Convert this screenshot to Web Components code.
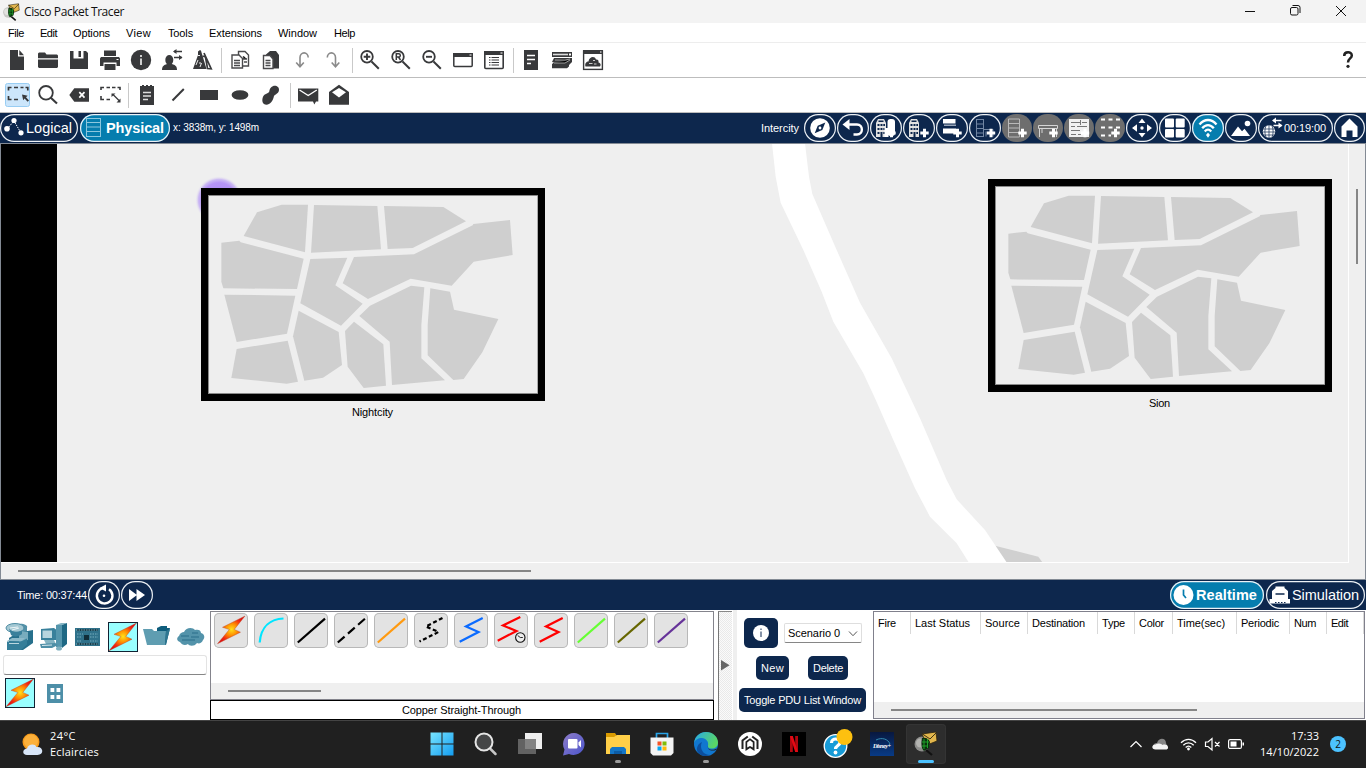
<!DOCTYPE html>
<html lang="en">
<head>
<meta charset="utf-8">
<title>Cisco Packet Tracer</title>
<style>
html,body{margin:0;padding:0;width:1366px;height:768px;overflow:hidden;background:#fff}
body{font:11px/14px "Liberation Sans",Arial,sans-serif;color:#000}
</style>
</head>
<body>
<pt-app></pt-app>
<script>
const define = (tag, css, html) => customElements.define(tag, class extends HTMLElement {
  connectedCallback() {
    if (this.shadowRoot) return;
    this.attachShadow({ mode: 'open' }).innerHTML =
      `<style>*{box-sizing:border-box}svg{display:block}${css}</style>${typeof html === 'function' ? html(this) : html}`;
  }
});

/* A single line of text, tracked so that it fills the width given in "w". */
customElements.define('pt-label', class extends HTMLElement {
  connectedCallback() {
    if (this.shadowRoot) return;
    this.attachShadow({ mode: 'open' }).innerHTML =
      '<style>:host{display:inline-block;white-space:nowrap;flex:none}span{display:inline-block}</style><span><slot></slot></span>';
    const w = +this.getAttribute('w'), span = this.shadowRoot.querySelector('span');
    if (!w) return;
    const natural = span.getBoundingClientRect().width;
    span.style.letterSpacing = ((w - natural) / this.textContent.length).toFixed(3) + 'px';
    this.style.width = w + 'px';
  }
});

const D = '#38393b';
const bolt = id => `<defs><radialGradient id="${id}" gradientUnits="userSpaceOnUse" cx="15" cy="14.500" r="15"><stop offset="0" stop-color="#ffe21a"/><stop offset=".4" stop-color="#ff8c00"/><stop offset=".75" stop-color="#f22a12"/><stop offset="1" stop-color="#e01010"/></radialGradient></defs><path d="M28.500 1L6 12.300l6.800 2.200L1 28.700 24 17.200l-6.200-2.800z" fill="url(#${id})" stroke="#b5482a" stroke-width=".4"/>`;
const plus = (x, y) => `<path d="M${x} ${y - 4.2}v8.400M${x - 4.2} ${y}h8.400" stroke="#fff" stroke-width="3"/>`;
const tracer = `<circle cx="9" cy="13" r="7.500" fill="#8d8d8b"/><circle cx="7.500" cy="12" r="4.500" fill="#b3b3b0"/><path d="M9 3l14-2 1 9-10 4z" fill="#e2b64c" stroke="#2d2410" stroke-width=".8"/><path d="M9.500 3l7.500 5 6.500-6.500" fill="none" stroke="#2d2410" stroke-width=".9"/><path d="M9 7c4-1 7 1 8 4l-1 6-5 3c-3-3-3-8-2-13z" fill="#0b300d"/><path d="M11 8v10M14.500 8v9M9 11h7M9 15h6" stroke="#1fa02a" stroke-width="1"/><path d="M13 19l6 5" stroke="#111" stroke-width="2.200"/>`;
const tower = `<path fill="#e2e2e2" d="M6 9l2-4h6l2 4v14H6z"/><path fill="#0d274d" d="M8.500 6.500h5v1.500h-5zM7.500 10h2v2h-2zM10.500 10h2v2h-2zM13.300 10h1.700v2h-1.700zM7.500 14h2v2h-2zM10.500 14h2v2h-2zM13.300 14h1.700v2h-1.700zM7.500 18h2v2h-2zM10.500 18h2v5h-2zM13.300 18h1.700v2h-1.700z"/>`;

/* name: [width, height, markup] */
const ICONS = {
  app: [18, 18, `<g transform="scale(.72)">${tracer.replace('r="7.500" fill="#8d8d8b"', 'r="7.500" fill="#c9c9c6"').replace('#b3b3b0', '#e2e2df')}</g>`],
  new: [31, 34, `<path fill="${D}" d="M9 7h8v6.500h6V27H9z"/><path fill="${D}" d="M18.300 7l4.700 5.200h-4.700z"/>`],
  open: [31, 34, `<path fill="${D}" d="M6 10.500l1-1h6l1.500 2H25l1 1v2.700H6zM6 16.500h20V24l-1 1H7l-1-1z"/>`],
  save: [31, 34, `<path fill="${D}" d="M7 8h3.500v7.500h10V8H23l2 2v16H7zM15.500 8H18v6h-2.500z"/>`],
  print: [31, 34, `<path fill="${D}" d="M10 7.500h12V13H10zM6 15.500l1-1.500h18l1 1.500V23h-3.500v-3.500h-13V23H6zM10.500 21h11v6h-11z"/><path stroke="#fff" d="M22.500 16.500h2"/>`],
  info: [31, 34, `<circle cx="16" cy="17" r="10.200" fill="${D}"/><path stroke="#cfcfcf" stroke-width="2" d="M16 15.500V22M16 12v2"/>`],
  user: [31, 34, `<ellipse cx="13.300" cy="17" rx="4" ry="5" fill="${D}"/><path fill="${D}" d="M6 27c0-4 2-5 5-6h5c3 1 5 2 5 6z"/><path stroke="${D}" stroke-width="1.300" fill="none" d="M18 8.500h8M18 14.500h8"/><path fill="${D}" d="M17 8.500l3.500-2.500v5zM26.500 14.500l-3.500-2.500v5z"/>`],
  metro: [31, 34, `<path fill="${D}" d="M11 8.500l2-1.500 1 .8L19.500 26H6l5-14z"/><path stroke="${D}" stroke-width="1.700" fill="none" d="M15.500 13l3 1 2 11.500 3.700.3L17 10"/><path stroke="#fff" stroke-width=".9" d="M9 22l2-5M13 24l1.500-4M11 12.500h2M12 20h2"/>`],
  copy: [31, 34, `<g fill="#fff" stroke="#4a4a4c" stroke-width="1.400"><path d="M13.500 8.500h6.500l3.500 3.500v11h-10z"/><path d="M7 12h7l3.500 3.500V25H7z"/></g><path stroke="#4a4a4c" stroke-width="1.300" d="M9 17.500h6M9 20h6M9 22.500h6M18.500 13v3h3.500M19 19h3"/>`],
  paste: [31, 34, `<path fill="${D}" d="M10 11.500l4-3.500h6l3 4v13.500H12z"/><path fill="#fff" stroke="#4a4a4c" stroke-width="1.400" d="M7.500 12.500H14l3 3.500v9.500H7.500z"/><path stroke="#4a4a4c" stroke-width="1.300" d="M9.500 17.500h5M9.500 20h5M9.500 22.500h5"/>`],
  undo: [31, 34, `<path fill="none" stroke="#8a8a8a" stroke-width="1.600" d="M21.200 14.500a4.100 4.600 0 0 0-8.200 0V23M9.200 19.500l3.800 4.300 3.800-4.300"/>`],
  redo: [31, 34, `<path fill="none" stroke="#8a8a8a" stroke-width="1.600" d="M9.300 14.500a4.100 4.600 0 0 1 8.200 0V23M13.700 19.500l3.800 4.300 3.800-4.300"/>`],
  zin: [31, 34, `<path fill="none" stroke="${D}" stroke-width="2" d="M16.500 18.500L23.800 25.700"/><circle cx="12" cy="13.800" r="5.800" fill="none" stroke="${D}" stroke-width="1.800"/><path stroke="${D}" stroke-width="1.900" d="M12 10.500v6.600M8.700 13.800h6.600"/>`],
  zre: [31, 34, `<path fill="none" stroke="${D}" stroke-width="2" d="M16.500 18.500L23.800 25.700"/><circle cx="12" cy="13.800" r="5.800" fill="none" stroke="${D}" stroke-width="1.800"/><path fill="none" stroke="${D}" stroke-width="1.500" d="M10.300 17v-6.200h2.500c2 0 2 3.200 0 3.200h-2.500M12.500 14l2 3"/>`],
  zout: [31, 34, `<path fill="none" stroke="${D}" stroke-width="2" d="M16.500 18.500L23.800 25.700"/><circle cx="12" cy="13.800" r="5.800" fill="none" stroke="${D}" stroke-width="1.800"/><path stroke="${D}" stroke-width="1.900" d="M9 13.800h6"/>`],
  win: [31, 34, `<rect x="5.800" y="11" width="18.400" height="12.500" rx="1" fill="#fff" stroke="${D}" stroke-width="1.500"/><path fill="${D}" d="M5 10h20v4H5z"/><path stroke="#fff" d="M21.500 12h2"/>`],
  list: [31, 34, `<rect x="5.800" y="9" width="18.400" height="16.500" rx="1" fill="#fff" stroke="${D}" stroke-width="1.600"/><path fill="${D}" d="M5 8h20v4H5z"/><path stroke="#fff" d="M21.500 10h2"/><path stroke="${D}" stroke-width="1.200" d="M10 14.500h1.500M12.500 14.500H20M10 17h1.500M12.500 17H20M10 19.500h1.500M12.500 19.500H20M10 22h1.500M12.500 22H20"/>`],
  doc: [31, 34, `<path fill="${D}" d="M8 7h14v20H8z"/><path stroke="#fff" stroke-width="1.300" d="M11 12.500h8M11 16.500h8M11 20.500h4"/>`],
  stack: [31, 34, `<path fill="${D}" d="M5 9h20v5H5z"/><path stroke="#ddd" stroke-width="1.600" d="M6 11.500h15"/><path stroke="#fff" stroke-width="2" d="M22 11.500h2"/><path fill="${D}" d="M7 15h18v4l-3 3v1.500l-2 1.700H5V21l2-1.500-2-.5z"/><path stroke="#bbb" stroke-width=".8" d="M8 17h10l5-1M7 20h11l5-3"/>`],
  cloud: [31, 34, `<rect x="5.600" y="8" width="18.800" height="18.400" fill="#fff" stroke="${D}" stroke-width="1.400"/><path fill="${D}" d="M5 7h20v4H5z"/><path stroke="#fff" d="M22 9h1.500"/><path fill="${D}" d="M7.500 23.500c-1-3 1-5 3-5 .5-5 6.500-6 7.500-2 2-.3 2.800 1 2.500 3 2.500.5 2.500 3 1.500 4z"/><path stroke="#ccc" stroke-width="1.200" d="M11 20.500h3.500M15 17.500h2M16 21h2.500"/>`],
  select: [31, 34, `<rect x="4.500" y="5.500" width="24" height="23" rx="2" fill="#cce6fb" stroke="#98cdf3"/><path fill="none" stroke="${D}" stroke-width="1.700" d="M7.500 12.500v-3h3M13 9.500h4M19.500 9.500h3M24.500 9.500h2.300v3M7.500 18v3.500h3M13 21.500h4"/><path fill="${D}" d="M21 16.500l5.700 1.200-1.700 1.500 3 3.200-1.400 1.300-3-3.300-1.400 1.800z"/>`],
  find: [31, 34, `<circle cx="14" cy="14.800" r="6.800" fill="none" stroke="${D}" stroke-width="1.800"/><path stroke="${D}" stroke-width="2.100" d="M18.800 19.700L25 25.600"/>`],
  del: [31, 34, `<path fill="${D}" d="M6.300 17l5-6.700H26v13.400H11.300z"/><path stroke="#fff" stroke-width="1.700" d="M16.300 14.200l5.200 5.400M21.500 14.200l-5.200 5.400"/>`],
  resize: [31, 34, `<path fill="none" stroke="${D}" stroke-width="1.600" d="M7 12V9.500h3M12.500 9.500H16M18 9.500h3.500M23.500 9.500H26V12M7 18v3.500h3M12.500 21.500H16"/><path stroke="${D}" stroke-width="1.300" d="M19 16.500l6.500 6.500"/><path fill="${D}" d="M17.500 15.500h4L17.500 19zM26.500 24.500v-4l-4 4z"/>`],
  note: [31, 34, `<path fill="${D}" d="M8 8h2V7h2v1h2V7h2v1h2V7h2v1h2v19H8z"/><path stroke="#ddd" stroke-width="1.300" d="M11 14.500h8M11 18h8M11 21.500h5"/>`],
  line: [31, 34, `<path stroke="${D}" stroke-width="2" d="M9.500 22.500L20.800 11"/>`],
  rect: [31, 34, `<path fill="${D}" d="M6 12h18v10H6z"/>`],
  oval: [31, 34, `<ellipse cx="15" cy="17" rx="8.400" ry="4.800" fill="${D}"/>`],
  blob: [31, 34, `<path fill="${D}" d="M15 9.500c3-3.500 8.500-1.500 8 2.500-.3 3.500-3.500 4-5 6-1 5-4 8.700-7.500 8.700-4 0-5-4-3.500-8 1.300-3.300 5.700-3.200 6.200-5 .3-1.700.8-3.200 1.800-4.200z"/>`],
  mail: [31, 34, `<path fill="${D}" d="M5 10.500h20.300V23.500H23l-1.700 3-1.300-3H5z"/><path fill="none" stroke="#fff" stroke-width="1.400" d="M6.500 12l8.700 5.500 8.600-5.500"/>`],
  openmail: [31, 34, `<path fill="${D}" d="M5 14l10-7.200L25 14v12.700H5z"/><path fill="#fff" d="M8 14.300L15 10l7 4.300-7 5.200z"/>`],
  logical: [28, 28, `<path stroke="#fff" stroke-width="1" fill="none" stroke-dasharray="1.500 1" d="M7 15L14 7l7 12"/><circle cx="7" cy="14.700" r="2.800" fill="#fff"/><circle cx="14" cy="6.500" r="2.600" fill="#fff"/><circle cx="21" cy="18.800" r="2.600" fill="#fff"/>`],
  physical: [26, 28, `<rect x="6.500" y="4.500" width="14" height="18" fill="none" stroke="#8cc7de"/><path stroke="#8cc7de" d="M6.500 8.500h14M6.500 13h14M6.500 17.500h14"/>`],
  compass: [32, 28, `<circle cx="16" cy="14" r="9.800" fill="#fff"/><path fill="#0d274d" d="M21.300 8.500l-3 7.600-7.600 3.200 3-7.600z"/><circle cx="16" cy="14" r="1.400" fill="#fff"/>`],
  back: [32, 28, `<path fill="none" stroke="#fff" stroke-width="2.400" d="M9 10.500h11c6.500 0 6.500 10 0 10h-3.500"/><path fill="#fff" d="M5.500 10.500L12.500 5v11z"/>`],
  city: [32, 28, `${tower}<path fill="#fff" d="M14.500 14h4v9h-4z"/><rect x="17.500" y="5" width="7.500" height="17" rx="3" fill="#fff"/>${plus(21.5, 19)}`],
  bldg: [32, 28, `${tower}${plus(21.5, 19)}`],
  wiring: [32, 28, `<path fill="#fff" d="M7 5h12.500v4.500H7zM7 14.500h13v5H7z"/><path fill="#98a5b8" d="M8 10.500h12V12H8z"/>${plus(21.5, 19)}`],
  rackdesk: [32, 28, `<path fill="none" stroke="#7286a3" d="M7.500 5v18M14.500 5v18M7.500 5.500h7M7.500 10h7M7.500 14.500h7M7.500 19h7M7.500 22.500h7M15 15.500h9v7M17 17.500v5"/>${plus(22, 19)}`],
  rack: [30, 28, `<path fill="none" stroke="#b9b9b9" d="M6.500 5h11v18h-11zM6.500 9.500h11M6.500 14h11M6.500 18.500h11"/>${plus(20.5, 19)}`],
  desk: [30, 28, `<path fill="none" stroke="#d5d5d5" d="M5.500 11.500h19v3h-19zM6.500 14.500V23M23.500 14.500V23M9 14.500V19"/>${plus(20.5, 19)}`],
  shelf: [30, 28, `<path fill="#f2f2f2" d="M5 5h20v18H5z"/><path stroke="#777" d="M7 8.500h9M18 8.500h5M7 12.500h4M13 12.500h10M7 16.500h9M7 20.500h5M14 20.500h3M16.500 6v5"/>${plus(21, 19)}`],
  dots: [30, 28, `<path stroke="#fff" stroke-width="2" stroke-dasharray="4 3.500" d="M6 5.500h19M6 13.500h19M6 21.500h10"/>${plus(20.5, 19)}`],
  move: [32, 28, `<path fill="#fff" d="M16 4.500l3.500 4.500h-7zM16 23.500l3.500-4.500h-7zM6 14l5-3.700v7.400zM26 14l-5-3.700v7.400z"/><circle cx="16" cy="14" r="1.700" fill="#fff"/>`],
  grid: [32, 28, `<g fill="#fff"><rect x="6" y="4.500" width="9" height="9" rx="1"/><rect x="16.700" y="4.500" width="9" height="9" rx="1"/><rect x="6" y="15" width="9" height="8.500" rx="1"/><rect x="16.700" y="15" width="9" height="8.500" rx="1"/></g>`],
  wifi: [32, 28, `<path fill="none" stroke="#fff" stroke-width="2.300" d="M7.500 10.500c5-6 12-6 17 0M10.200 14.200c3.500-4.200 8.100-4.200 11.600 0M12.800 17.500c2-2.400 4.400-2.400 6.400 0"/><path fill="#fff" d="M16 18.800l2 2.200-2 2.700-2-2.700z"/>`],
  scene: [32, 28, `<path fill="#fff" d="M6 22l7-9.500 4 4.800 2.500-2.600L25 22z"/><circle cx="22.500" cy="9.500" r="2.800" fill="#fff"/>`],
  globe: [26, 28, `<circle cx="11" cy="17.500" r="6.200" fill="#fff"/><path stroke="#0d274d" stroke-width=".7" fill="none" d="M5 15h12M5 18h12M5.500 21h11M11 11v13M8 12c-1.500 3-1.500 8 0 11M14 12c1.500 3 1.500 8 0 11"/><path fill="none" stroke="#fff" stroke-width="1.400" d="M15.500 6.500h8M15.500 11.500h8"/><path fill="#fff" d="M14 6.500l4-3v6zM24.500 11.500l-4-3v6z"/>`],
  home: [31, 28, `<path fill="#fff" d="M7.500 12.500L15.500 4.500l8 8V23h-5v-6.500h-6V23h-5z"/>`],
  reset: [32, 28, `<path fill="none" stroke="#fff" stroke-width="2.400" d="M14.500 7.200a7.800 7.800 0 1 0 6.500 1"/><path fill="#fff" d="M11.500 7l6.500-3.500v7z"/><circle cx="16" cy="14.800" r="1.300" fill="#fff"/>`],
  ff: [32, 28, `<path fill="#fff" d="M8 8l8 6-8 6zM15.500 8l8.500 6-8.500 6z"/>`],
  clock: [25, 28, `<circle cx="13.500" cy="14" r="10" fill="#fff"/><path fill="none" stroke="#057dae" stroke-width="1.700" d="M13.500 8.500v5.500l2.500 3"/>`],
  sim: [25, 28, `<path fill="#fff" d="M6 19.500V10l3.500-3v-1.500h9V7L22 10v9.500z"/><path fill="#fff" d="M3.500 18h20.500v4.500H3.500z"/><path stroke="#0d274d" stroke-width="1.500" d="M9.500 13h9"/><path stroke="#0d274d" d="M9 21.500h1.500M12 21.500h1.500M15 21.500h1.500M18 21.500h1.500"/>`],
  bolt: [30, 30, `<rect x=".5" y=".5" width="29" height="29" fill="#9ff" stroke="#123"/>${bolt('b1')}`],
  cableauto: [35, 35, `<g transform="translate(2.500 2)">${bolt('b2')}</g>`],
  arc: [35, 35, `<path d="M5.700 29.500C7 13 17 6 29.500 5.500" fill="none" stroke="#00e5ff" stroke-width="2.200"/>`],
  zdash: [35, 35, `<path d="M28.500 5L12 13.500l12.500 5.500L5.500 28.500" fill="none" stroke="#000" stroke-width="2.200" stroke-dasharray="4 2.500"/>`],
  zblue: [35, 35, `<path d="M28.700 5L12 13.500 24.500 19 5.700 28.700" fill="none" stroke="#0b6bff" stroke-width="2.200"/>`],
  zred: [35, 35, `<path d="M28.700 5L12 13.500 24.500 19 5.700 28.700" fill="none" stroke="#f00" stroke-width="2.200"/>`],
  zclock: [35, 35, `<path d="M26.300 4L9 12.500 22.500 18 3.700 27.700" fill="none" stroke="#f00" stroke-width="2.200"/><circle cx="26.300" cy="24.500" r="4.700" fill="#eee" stroke="#111" stroke-width="1.100"/><path d="M23.700 22.500l2.600 2h2.500" fill="none" stroke="#111" stroke-width=".9"/>`],
  router: [30, 30, `<path fill="#5391a8" d="M8 4c5-4 16-2 14 2v8H10z"/><path fill="#27708c" d="M12 11l16-3v13l-10 7H4V16z"/><path fill="#78acbd" d="M14 9l9 1v8l-9 2z"/><ellipse cx="10" cy="6" rx="9" ry="4.500" fill="#a4c8d3" stroke="#4e8ca3"/><path fill="#3a809b" d="M4 6.500c3 4 9 4 13 2V12c-3 3-9 3-11 1z"/><path stroke="#fff" stroke-width=".8" d="M5 6l8-1M7 8l7-2"/><path fill="#8dbac9" d="M2 19l5-3h13l-4 3.500z"/><path fill="#357e99" d="M2 19.500h14V28H2zM16 19.500l6-3v6L16 28z"/><path stroke="#bbd6de" d="M4 21.500h10"/>`],
  pc: [30, 30, `<path fill="#86b5c4" d="M17 3l5-2h6l-5 2z"/><path fill="#5596ad" d="M17 3h6v22h-6z"/><path fill="#1e6884" d="M23 3l5-2v21l-5 4z"/><path fill="#38809b" d="M2 7l13-1 2 1.500V18H2z"/><path fill="#b7d5de" d="M3.500 8.500h9.500V16H3.500z"/><path fill="#85b4c3" d="M5 18h10l2 4H7z"/><path fill="#4e8fa7" d="M1 22l15-1 3 2-6 3H2z"/><path stroke="#d7e8ed" d="M3 23.500l10-.5"/><ellipse cx="20" cy="26.500" rx="3" ry="2" fill="#7eb0c0"/>`],
  board: [30, 30, `<path fill="#2f718a" d="M2 6h25v18H2z"/><path stroke="#163b49" stroke-width="2.200" d="M4 8h21M4 22h21"/><path fill="#102d39" d="M11 13h5v5h-5z"/><path stroke="#7fb4c4" stroke-width=".9" stroke-dasharray="1.500 1" d="M3 8h22M3 22h22M4 12h6M17 12h8M17 15h8M4 19h5M17 19h8M4 15h5"/>`],
  files: [30, 30, `<path fill="#0f5d7c" d="M15 6l4-2h6v2h3l-4 17-9-4z"/><path fill="#5f9db1" d="M1 7h9l2 2h12l-1 14H5z"/><path fill="#2f7690" d="M24 9l4-2-4 15-1 1z"/>`],
  devcloud: [30, 30, `<path fill="#5393aa" d="M4 20c-3-1-4-4-1-6 1-3 3-4 5-4 2-5 9-5 11-2 3-1 6 0 6 3 4 1 4 5 2 7-1 3-4 4-6 3-3 4-8 3-9 1-3 2-6 1-8-2z"/><path stroke="#2b6f89" stroke-width="1.200" d="M5 14h8M16 11h6M6 18h13M15 15h8"/>`],
  building: [16, 19, `<path fill="#4d8fa8" d="M0 0h16v19H0z"/><path fill="#fff" d="M3.500 4h3.800v4H3.500zM9.500 4h3.800v4H9.500zM3.500 11h3.800v4H3.500zM9.500 11h3.800v4H9.500z"/>`],
  infobtn: [34, 30, `<circle cx="17" cy="15" r="8" fill="#fff"/><path stroke="#5d6f8a" stroke-width="1.500" d="M17 13.500V19M17 10.500v1.600"/>`],
  weather: [24, 24, `<circle cx="11" cy="10" r="8.500" fill="#f59a1b"/><circle cx="11" cy="9.500" r="7" fill="#fbb03b"/><path fill="#d8e6f8" d="M7 23c-5 0-5-6 0-6.500 1-4.500 8-5.500 9.500-1.500 7-1 8 8 1 8z"/>`],
  start: [24, 24, `<defs><linearGradient id="s" gradientUnits="userSpaceOnUse" x1="0" y1="0" x2="24" y2="24"><stop offset="0" stop-color="#7ae6ff"/><stop offset="1" stop-color="#119bf0"/></linearGradient></defs><path fill="url(#s)" d="M.5.500h11v11H.5zM12.500.500h11v11h-11zM.5 12.500h11v11H.5zM12.500 12.500h11v11h-11z"/>`],
  search: [24, 24, `<path stroke="#c6c6c6" stroke-width="2.500" stroke-linecap="round" d="M16.500 17l5 5"/><circle cx="10" cy="10" r="8.500" fill="#454647" stroke="#e5e5e5" stroke-width="2"/>`],
  tasks: [26, 24, `<path fill="#eee" d="M8 1h17v16H8z"/><path fill="#6e6e6e" fill-opacity=".85" d="M1 7h18v15H1z"/>`],
  chat: [24, 24, `<defs><linearGradient id="c" x1="0" y1="0" x2="1" y2="1"><stop offset="0" stop-color="#8e7cc8"/><stop offset="1" stop-color="#4b55cc"/></linearGradient></defs><path fill="url(#c)" d="M12 1a11 11 0 1 1-5 21l-6 1.500 1.500-6A11 11 0 0 1 12 1z"/><rect x="6" y="7" width="9.500" height="9.500" rx="1" fill="#fff"/><path fill="#fff" d="M16.500 10.500L19 8v7.500l-2.500-2.500z"/>`],
  explorer: [26, 24, `<path fill="#d99a00" d="M1 1h9l2 3h13v6H1z"/><path fill="#ffcf48" d="M1 5h8l3-2h13v19H1z"/><path fill="#1476c6" d="M5 22v-5l2-2h12l2 2v5z"/><path fill="#0c5ca5" d="M9 19h8v3H9z"/>`],
  store: [24, 24, `<path fill="none" stroke="#2aa4e8" stroke-width="1.700" d="M6.500 7V1.500h11V7"/><path fill="#f4f4f4" d="M.5 5.500h23V21l-2.500 2.500H3L.5 21z"/><path fill="#f35325" d="M7.500 9.500h4v4h-4z"/><path fill="#81bc06" d="M12.500 9.500h4v4h-4z"/><path fill="#05a6f0" d="M7.500 14.500h4v4h-4z"/><path fill="#ffba08" d="M12.500 14.500h4v4h-4z"/>`],
  edge: [24, 24, `<defs><linearGradient id="e" x1="0" y1="0" x2="1" y2=".4"><stop offset="0" stop-color="#27a9ea"/><stop offset="1" stop-color="#59d665"/></linearGradient></defs><circle cx="12" cy="12" r="12" fill="#1177cf"/><path fill="url(#e)" d="M0 11C1 4 6 0 12 0c7 0 12 5 12 10.500 0 4-3 6-6 6-3.500 0-4.500-1.500-4-3C15 10 12 6 8 6 4 6 1 8 0 11z"/><path fill="#0c4f9e" d="M8 10c-3 6 1 13 8 13-6 3-14-1-13-7 .5-3 2.500-5 5-6z"/><path fill="#202020" d="M14 13.500c-1.500 3 3 6 9 3l-.5 1.200C17 20 13 17.500 14 13.500z"/>`],
  hex: [24, 24, `<circle cx="12" cy="12" r="12" fill="#fff"/><path fill="none" stroke="#222" stroke-width="2" d="M4.500 17V8.500L9.800 4.500M19.500 17V8.500l-5.300-4"/><path fill="#222" d="M7.500 9.500L12 6.200l4.500 3.300V19L12 16l-4.500 3z"/><path fill="#fff" d="M9.200 10.500L12 8.300l2.800 2.200v5L12 14l-2.800 1.500z"/>`],
  netflix: [24, 24, `<path fill="#000" d="M0 0h24v24H0z"/><path fill="#b20710" d="M8 4h2.800v16H8zM13.200 4H16v16h-2.800z"/><path fill="#e50914" d="M8 4h2.800L16 20h-2.800z"/>`],
  help: [30, 30, `<circle cx="12.500" cy="17" r="11.300" fill="#179bd7" stroke="#fff" stroke-width="1.300"/><path fill="none" stroke="#fff" stroke-width="3.200" d="M8.500 14c0-5.500 8.500-5 8.500-.5 0 3-4.500 3-4.500 6.500"/><circle cx="12.500" cy="23.500" r="1.900" fill="#fff"/><circle cx="21.500" cy="8" r="8" fill="#fdc00f"/>`],
  disney: [24, 24, `<defs><linearGradient id="d" x2="0" y2="1"><stop stop-color="#08183f"/><stop offset="1" stop-color="#083b86"/></linearGradient></defs><path fill="url(#d)" d="M0 0h24v24H0z"/><path fill="none" stroke="#3ea5c5" stroke-width=".8" d="M6 8c6-3 12-1 14 4"/><text x="3" y="15.500" font-family="Liberation Serif" font-style="italic" font-weight="bold" font-size="6.300" fill="#fff" textLength="18">Disney+</text>`],
  tracer: [26, 26, tracer],
  chev: [14, 16, `<path fill="none" stroke="#fff" stroke-width="1.200" d="M1.500 11L7 5.500l5.500 5.500"/>`],
  onedrive: [17, 16, `<path fill="#858585" d="M1 10c1-3 3-3 4-3C7 1 14 2 14 7l2 6H4z"/><path fill="#f3f3f3" d="M3.500 13.500c-4.500 0-4-5 0-5 3-2 6-1 7 .5 2-1 5-.5 5.500 2 .3 1.500-1 2.500-2 2.500z"/>`],
  traywifi: [17, 16, `<path fill="none" stroke="#fff" stroke-width="1.300" d="M1 6.800c4.500-4.600 10.500-4.600 15 0M3.300 9.200c3-3.200 7.400-3.200 10.400 0M5.700 11.500c1.800-1.800 3.800-1.800 5.600 0"/><circle cx="8.500" cy="13" r="1.400" fill="#fff"/>`],
  mute: [17, 16, `<path fill="none" stroke="#fff" stroke-width="1.200" d="M1.500 6h2.500l4-3.500v11.500L4 10.500H1.500zM11 6l4.500 4.500M15.500 6L11 10.500"/>`],
  battery: [18, 16, `<rect x="1.600" y="3.600" width="12.800" height="8.800" rx="1.500" fill="none" stroke="#fff" stroke-width="1.200"/><path fill="#fff" d="M3.500 5.500h6v5h-6zM15.500 6.500H17v3h-1.500z"/>`],
};
const lineIcon = (c, dash = '') => [35, 35, `<path d="M3.800 29.500L31 5.700" stroke="${c}" stroke-width="2.200" ${dash}/>`];
Object.assign(ICONS, {
  lblack: lineIcon('#000'), ldash: lineIcon('#000', 'stroke-dasharray="9 4.500"'), lorange: lineIcon('#ff9a10'),
  lgreen: lineIcon('#66ff33'), lolive: lineIcon('#666600'), lpurple: lineIcon('#663399')
});
define('pt-icon', ':host{display:block;flex:none}', el => {
  const [w, h, body] = ICONS[el.getAttribute('name')];
  return `<svg width="${w}" height="${h}" viewBox="0 0 ${w} ${h}">${body}</svg>`;
});
const icon = n => `<pt-icon name="${n}"></pt-icon>`;

define('pt-titlebar', `:host{display:flex;height:23px;background:#f3f3f3;align-items:center;padding-left:2px;font:12px/16px "Open Sans","Noto Sans",sans-serif;color:#111}
  pt-label{margin-left:4px}.ctl{margin-left:auto;display:flex;padding-right:2px}`,
  `${icon('app')}<pt-label w="100">Cisco Packet Tracer</pt-label><div class="ctl">
   <svg width="46" height="23"><path d="M19 11.500h10" stroke="#111"/></svg>
   <svg width="46" height="23"><rect x="18.500" y="7.500" width="7.500" height="7.500" rx="1.500" fill="none" stroke="#111"/><path d="M20.500 5.500h5.500q2 0 2 2v5.500" fill="none" stroke="#111"/></svg>
   <svg width="46" height="23"><path d="M18 6l10 10M28 6L18 16" stroke="#111"/></svg></div>`);

define('pt-menubar', `:host{display:grid;height:20px;background:#fff;border-bottom:1px solid #ededed;padding-left:8px;align-items:center;
  grid-template-columns:32px 33px 53px 42px 41px 69px 56px 40px}`,
  [['File',16],['Edit',17],['Options',37],['View',25],['Tools',25],['Extensions',53],['Window',39],['Help',21]]
    .map(([t, w]) => `<pt-label w="${w}">${t}</pt-label>`).join(''));

define('pt-toolbar', `:host{display:flex;height:35px;background:#fff;border-bottom:1px solid #bdbdbd;padding-left:1px;align-items:flex-start}
  i{width:1px;height:25px;margin:5px 3px 0;background:#c9c9c9}i.n{margin-right:2px}::slotted(*){margin-left:auto;margin-right:10px;align-self:center}`,
  el => el.getAttribute('items').split(' ').map(n => n === '|' ? '<i></i>' : n === '/' ? '<i class="n"></i>' : icon(n)).join('') + '<slot></slot>');

define('pt-pill', `:host{display:flex;flex:none;box-sizing:border-box;height:28px;width:32px;border-radius:14px;align-items:center;overflow:hidden;box-shadow:inset 0 0 0 1.200px #eef2f6;color:#fff}
  :host([on]){background:#057dae}:host([off]){background:#6e6e6e;box-shadow:none;width:30px}`,
  el => icon(el.getAttribute('icon')) + '<slot></slot>');

define('pt-navbar', `:host{display:flex;height:30px;background:#0d274d;align-items:center;gap:1px;padding:0 1px;color:#fff}
  .t{font-size:14.500px;line-height:20px}.x{font-size:10px;margin-left:2px}.r{margin-left:auto;margin-right:4px}`,
  `<pt-pill icon="logical" style="width:78px;margin-left:-1px"><pt-label class="t" w="46" style="margin-left:-2px">Logical</pt-label></pt-pill>
   <pt-pill on icon="physical" style="width:90px;margin-left:1px"><pt-label class="t" w="58" style="font-weight:bold">Physical</pt-label></pt-pill>
   <pt-label class="x" w="86">x: 3838m, y: 1498m</pt-label><pt-label class="r" w="38">Intercity</pt-label>` +
  ['compass','back','city','bldg','wiring','rackdesk'].map(n => `<pt-pill icon="${n}"></pt-pill>`).join('') +
  ['rack','desk','shelf','dots'].map(n => `<pt-pill off icon="${n}"></pt-pill>`).join('') +
  `<pt-pill icon="move"></pt-pill><pt-pill icon="grid"></pt-pill><pt-pill on icon="wifi"></pt-pill><pt-pill icon="scene"></pt-pill>
   <pt-pill icon="globe" style="width:75px"><pt-label w="42">00:19:00</pt-label></pt-pill><pt-pill icon="home" style="width:31px"></pt-pill>`);

/* A city on the map: a framed block plan with its name below. */
define('pt-city', `:host{display:flex;flex-direction:column;align-items:center;width:344px;position:absolute}
  svg{background:#eee}div{margin:4px 1px 0 0}`,
  `<svg width="344" height="213" viewBox="33 54 1032 639"><g fill="#cfcfcf">
  <path d="M161 198L201 127 275 104H354L345 247z"/><path d="M372 105L562 108 573 238 363 248z"/>
  <path d="M582 108L760 111 828 154 668 234 593 237z"/>
  <path d="M94 218L148 212 152 217 341 266 321 357 100 355 94 335z"/>
  <path d="M103 374L316 377 291 491 140 516z"/><path d="M140 537L293 512 324 635 290 641 124 624z"/>
  <path d="M361 267L472 263 436 346 518 401 453 467 331 400z"/>
  <path d="M492 261L672 253 848 166 850 162 960 150 968 255 851 275 785 347 662 326 534 387 458 340z"/>
  <path d="M326 422L446 486 456 585 399 623 343 632 309 499z"/>
  <path d="M465 483L492 455 580 523 588 647 521 654 473 590z"/>
  <path d="M508 438L540 407 663 347 703 352 694 465V565L765 631 606 645 599 515z"/>
  <path d="M721 355L780 365 792 419 925 447 877 547 821 627 790 630 713 556V465z"/></g>
  <rect x="55.500" y="76.500" width="988" height="594" fill="none" stroke="#8a8a8a" stroke-width="3"/>
  <rect x="43.500" y="64.500" width="1011" height="618" fill="none" stroke="#000" stroke-width="21"/></svg><div><slot></slot></div>`);

define('pt-workspace', `:host{display:grid;height:437px;box-sizing:border-box;background:#efefef;border:1px solid #838a94;
   grid-template:418px 1fr/1348px 1fr;position:relative}
  .map{position:relative;overflow:hidden;border-right:1px solid #fff;box-shadow:0 1px 0 #fff}
  .v{padding:45px 0 0 7px}.v i{display:block;width:2px;height:75px;background:#868686}.h{padding:8px 0 0 17px}.h i{display:block;width:513px;height:2px;background:#868686}
  .scene{position:absolute;left:0;top:0}.a{left:200px;top:44px}.b{left:987px;top:35px}`,
  `<div class="map"><svg class="scene" width="1348" height="418" viewBox="1 144 1348 418">
   <defs><radialGradient id="p"><stop offset="0" stop-color="#a987f5"/><stop offset=".72" stop-color="#b695f6"/><stop offset=".86" stop-color="#cdbcf3"/><stop offset="1" stop-color="#efefef" stop-opacity="0"/></radialGradient></defs>
   <path d="M1 144h56v418H1z"/><circle cx="219" cy="200" r="24" fill="url(#p)"/>
   <g transform="translate(740 140) scale(.33333)"><path fill="#d0d0d0" d="M765 1217L895 1250 908 1268H790z"/>
   <path fill="#fff" d="M96 10L107 110 122 188 190 330 245 455 280 545 370 700 405 775 460 900 525 1045 570 1130 650 1210 688 1270H802L735 1170 650 1078 620 1020 540 835 455 655 360 488 290 330 217 162 207 110 195 10z"/></g></svg>
   <pt-city class="a"><pt-label w="41">Nightcity</pt-label></pt-city><pt-city class="b"><pt-label w="21">Sion</pt-label></pt-city></div>
   <div class="v"><i></i></div><div class="h"><i></i></div>`);

define('pt-timebar', `:host{display:flex;height:30px;background:#0d274d;align-items:center;gap:1px;padding-right:1px;color:#fff}
  .t{font-size:14.500px;line-height:20px}`,
  `<pt-label w="70" style="margin-left:17px">Time: 00:37:44</pt-label><pt-pill icon="reset"></pt-pill><pt-pill icon="ff"></pt-pill>
   <pt-pill on icon="clock" style="width:94px;margin-left:auto;margin-right:1px"><pt-label class="t" w="61" style="font-weight:bold;margin-left:1px">Realtime</pt-label></pt-pill>
   <pt-pill icon="sim" style="width:99px"><pt-label class="t" w="67" style="margin-left:1px">Simulation</pt-label></pt-pill>`);

define('pt-devices', `:host{display:block;width:210px;flex:none;background:#fff}
  .k{display:flex;gap:4px;padding:12px 0 0 5px}.k :nth-child(4){margin-left:1px}.f{width:204px;height:20px;margin:3px 0 0 3px;border:1px solid #e3e3e3;border-bottom-color:#868686;border-radius:3px}
  .s{display:flex;align-items:center;gap:12px;padding:3px 0 0 5px}`,
  `<div class="k">${['router','pc','board','bolt','files','devcloud'].map(icon).join('')}</div><div class="f"></div><div class="s">${icon('bolt')}${icon('building')}</div>`);

define('pt-cables', `:host{display:flex;flex-direction:column;width:504px;flex:none;background:#fff;padding-top:1px;box-sizing:border-box}
  .p{height:89px;border:1px solid #84848c;display:flex;flex-direction:column}
  .r{display:flex;gap:6px;padding:1px 0 0 3px;flex:1}b{width:34px;height:35px;border-radius:5px;background:#e3e3e3;box-shadow:inset 0 0 0 1px #b8b8b8}b pt-icon{margin-left:-.5px}
  .s{height:16px;background:#efefef;padding:7px 0 0 17px}.s i{display:block;width:93px;height:2px;background:#868686}
  .l{height:20px;border:1px solid #000;text-align:center;line-height:18px;padding-right:1px}`,
  `<div class="p"><div class="r">${['cableauto','arc','lblack','ldash','lorange','zdash','zblue','zclock','zred','lgreen','lolive','lpurple'].map(n => `<b>${icon(n)}</b>`).join('')}</div>
   <div class="s"><i></i></div></div><div class="l"><pt-label w="119">Copper Straight-Through</pt-label></div>`);

define('pt-splitter', `:host{display:flex;width:19px;margin-left:4px;flex:none;background:#fff;padding-top:1px;box-sizing:border-box}
  .d{width:14px;border-top:1px solid #888;border-left:1.500px solid #777;background:repeating-conic-gradient(#e9e9e9 0 25%,#fafafa 0 50%) 0 0/2px 2px}
  .e{width:4px;margin:-1px 0 0 1px;background:#efefef}svg{margin:48px 0 0 1.500px}`,
  `<div class="d"><svg width="9" height="11"><path fill="#666" d="M0 0l8.500 5.300L0 10.600z"/></svg></div><div class="e"></div>`);

define('pt-button', `:host{display:flex;align-items:center;justify-content:center;box-sizing:border-box;height:24px;border-radius:5px;background:#0d274d;color:#fff}`, '<slot></slot>');

define('pt-scenario', `:host{display:flex;flex-direction:column;width:136px;flex:none;background:#fff;box-sizing:border-box;padding:8px 7px 0 2px}
  .r{display:flex;align-items:center}.c{display:flex;align-items:center;width:78px;height:20px;margin-left:6px;padding-left:3px;border:1px solid #dedede;border-bottom-color:#868686;border-radius:2px}`,
  `<div class="r" style="padding-left:5px"><pt-button style="width:34px;height:30px">${icon('infobtn')}</pt-button>
   <div class="c"><pt-label w="52">Scenario 0</pt-label><svg width="10" height="8" style="margin-left:8px;margin-top:1px"><path d="M1 1.500l4 4.200 4-4.200" fill="none" stroke="#555"/></svg></div></div>
   <div class="r" style="padding:8px 0 8px 17px;gap:19px"><pt-button style="width:33px"><pt-label w="23">New</pt-label></pt-button><pt-button style="width:40px"><pt-label w="30">Delete</pt-label></pt-button></div>
   <pt-button><pt-label w="117">Toggle PDU List Window</pt-label></pt-button>`);

define('pt-pdulist', `:host{display:flex;flex-direction:column;width:492px;height:108px;margin-top:1px;flex:none;background:#fff;border:1px solid #80808c;box-sizing:border-box}
  .h{display:grid;height:22px;align-items:center;grid-template-columns:37px 70px 47px 70px 37px 38px 64px 53px 37px 37px}
  .h div{height:22px;border-right:1px solid #d9d9d9;padding:4px 0 0 4px}
  .s{margin-top:auto;height:16px;background:#efefef;padding:7px 0 0 17px}.s i{display:block;width:306px;height:2px;background:#868686}`,
  `<div class="h">${[['Fire',18],['Last Status',55],['Source',35],['Destination',53],['Type',23],['Color',25],['Time(sec)',48],['Periodic',38],['Num',22],['Edit',17]]
    .map(([t, w]) => `<div><pt-label w="${w}">${t}</pt-label></div>`).join('')}</div><div class="s"><i></i></div>`);

define('win-taskbar', `:host{display:flex;height:48px;background:#202020;border-top:1px solid #444;box-sizing:border-box;align-items:center;padding-bottom:1px;color:#fff;font:11px/16px "Open Sans","Noto Sans",sans-serif}
  .w{display:flex;align-items:center;width:419px;padding-left:20px;gap:6px}.w div,.clk{display:flex;flex-direction:column}
  .apps{display:flex;gap:4px;margin-left:2.500px}.a{width:40px;height:40px;border-radius:4px;display:flex;align-items:center;justify-content:center;position:relative}
  .a.on{background:#2d2d2d;box-shadow:inset 0 0 0 1px #343434}.a i{position:absolute;bottom:1px;width:6px;height:3px;border-radius:2px;background:#9b9b9b}.a.on i{width:16px;background:#4cc2ff}
  .tray{margin-left:auto;display:flex;align-items:center}.clk{align-items:flex-end;margin-left:15px}
  .n{width:16px;height:16px;border-radius:8px;background:#4cc2ff;color:#111;font-size:10px;text-align:center;margin:0 20px 0 11px}`,
  `<div class="w">${icon('weather')}<div><pt-label w="26">24°C</pt-label><pt-label w="49">Eclaircies</pt-label></div></div>
   <div class="apps">${['start','search','tasks','chat','explorer','store','edge','hex','netflix','help','disney','tracer']
     .map(n => `<div class="a${n === 'tracer' ? ' on' : ''}">${icon(n)}${['explorer','edge','tracer'].includes(n) ? '<i></i>' : ''}</div>`).join('')}</div>
   <div class="tray">${[['chev',8.5],['onedrive',11],['traywifi',7],['mute',6.5],['battery',0]].map(([n, m]) => `<pt-icon name="${n}" style="margin-right:${m}px"></pt-icon>`).join('')}
   <div class="clk"><pt-label w="28">17:33</pt-label><pt-label w="59">14/10/2022</pt-label></div><div class="n">2</div></div>`);

define('pt-app', `:host{display:flex;flex-direction:column;width:1366px;height:768px;overflow:hidden;background:#fff}
  .b{display:flex;height:110px;flex:none}`,
  `<pt-titlebar></pt-titlebar><pt-menubar></pt-menubar>
   <pt-toolbar items="new open save print info user metro | copy paste undo redo / zin zre zout win list / doc stack cloud"><svg width="16" height="22" viewBox="0 0 16 22"><path d="M4.200 7c0-4.800 7.600-4.800 7.600-.5C11.800 9.500 8 9.500 8 13.500" fill="none" stroke="#222" stroke-width="2.500"/><circle cx="8" cy="17.300" r="1.600" fill="#222"/></svg></pt-toolbar>
   <pt-toolbar items="select find del resize | note line rect oval blob / mail openmail"></pt-toolbar>
   <pt-navbar></pt-navbar><pt-workspace></pt-workspace><pt-timebar></pt-timebar>
   <div class="b"><pt-devices></pt-devices><pt-cables></pt-cables><pt-splitter></pt-splitter><pt-scenario></pt-scenario><pt-pdulist></pt-pdulist></div>
   <win-taskbar></win-taskbar>`);
</script>
</body>
</html>
